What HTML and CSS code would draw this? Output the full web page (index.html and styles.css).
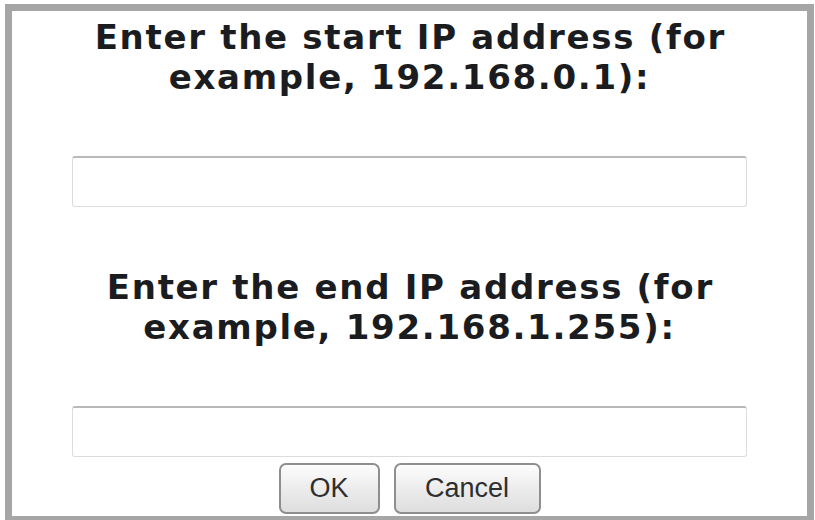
FILE: index.html
```html
<!DOCTYPE html>
<html lang="en">
<head>
<meta charset="utf-8">
<title>IP range</title>
<link rel="stylesheet" href="styles.css">
</head>
<body>
<div class="dialog">
  <p class="prompt">Enter the start IP address (for<br>example, 192.168.0.1):</p>
  <input class="field field-first" type="text" aria-label="Start IP address">
  <p class="prompt">Enter the end IP address (for<br>example, 192.168.1.255):</p>
  <input class="field field-second" type="text" aria-label="End IP address">
  <div class="actions">
    <button class="btn btn-ok" type="button">OK</button>
    <button class="btn btn-cancel" type="button">Cancel</button>
  </div>
</div>
</body>
</html>
```

FILE: styles.css
```css
html, body {
  margin: 0;
  padding: 0;
  background: #ffffff;
}

.dialog {
  box-sizing: border-box;
  margin: 4px 0 0 5px;
  width: 809px;
  height: 519px;
  border: 7px solid #a6a6a6;
  background: #ffffff;
  padding: 6px 0 2px;
  display: flex;
  flex-direction: column;
  align-items: center;
}

.prompt {
  margin: 0;
  width: 100%;
  text-align: center;
  font-family: "DejaVu Sans", Verdana, sans-serif;
  font-weight: 700;
  font-size: 34px;
  line-height: 40px;
  letter-spacing: 1.7px;
  text-indent: 1.7px;
  color: #1b1c20;
}

.field {
  box-sizing: border-box;
  display: block;
  width: 675px;
  height: 51px;
  margin: 59px 0 60px;
  padding: 0 8px;
  border: 1px solid #dcdcdc;
  border-top: 2px solid #b9b9b9;
  border-radius: 3px;
  background: #ffffff;
  font-family: "Liberation Sans", Arial, sans-serif;
  font-size: 20px;
  outline: none;
}

.field-second {
  margin-bottom: 6px;
}

.actions {
  display: flex;
  justify-content: center;
  gap: 14px;
}

.btn {
  box-sizing: border-box;
  height: 51px;
  border: 2px solid #8e8e8e;
  border-radius: 7px;
  background: linear-gradient(#fdfdfd 0%, #ececec 50%, #dedede 100%);
  font-family: "Liberation Sans", Arial, sans-serif;
  font-size: 27px;
  color: #2e2e2e;
  padding: 0;
  cursor: pointer;
}

.btn-ok {
  width: 101px;
}

.btn-cancel {
  width: 147px;
}
```
